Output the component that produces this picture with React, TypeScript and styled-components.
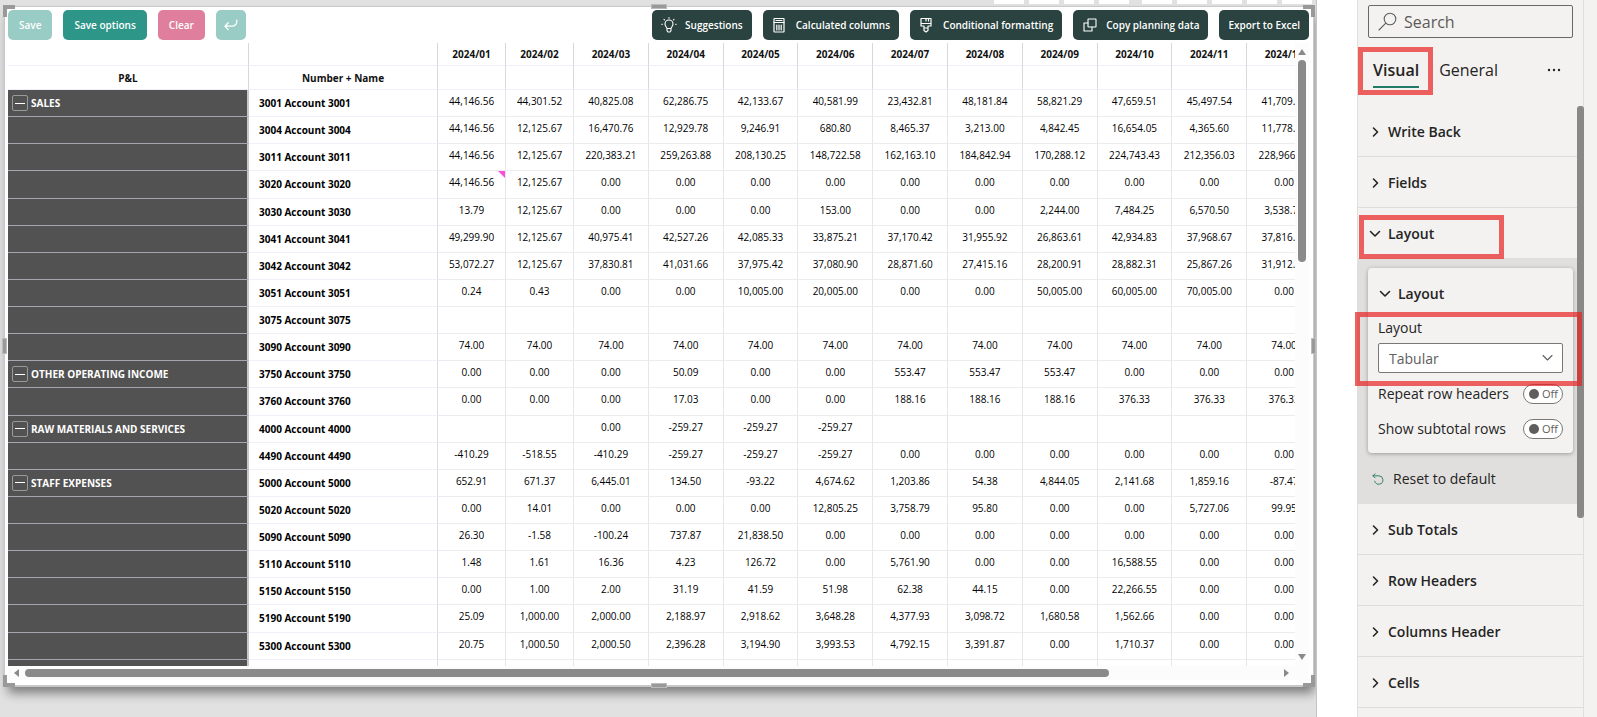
import React from "react";
import styled, { createGlobalStyle } from "styled-components";

const GlobalStyle = createGlobalStyle`
  * { box-sizing: border-box; }
  body { margin: 0; background: #fff; font-family: "Open Sans", "Noto Sans", sans-serif; color: #111; }
  button, input, select { font-family: inherit; }
`;

const Page = styled.div`
  display: flex;
  min-height: 100vh;
  overflow: hidden;
`;

/* ---------- report canvas ---------- */

const Canvas = styled.main`
  flex: 1;
  min-width: 0;
  margin-right: 40px;
  padding: 0 2px 0 4px;
  overflow: hidden;
  background: #e1e1e1;
  border-right: 1px solid #c4c4c4;
`;

const HeaderStrip = styled.div`
  display: flex;
  justify-content: flex-end;
  gap: 5px;
  height: 6px;
  padding: 0 2px 2px 0;
`;

const HeaderSlot = styled.span<{ $gapAfter?: boolean }>`
  width: 30px;
  background: #fff;
  margin-right: ${(p) => (p.$gapAfter ? "8px" : "0")};
`;

const Visual = styled.section`
  position: relative;
  background: #fff;
  border: 1px solid #c8c8c8;
  border-bottom-width: 2px;
  padding: 3px 4px 5px 3px;
  box-shadow: 2px 8px 10px -2px rgba(0, 0, 0, 0.45);
`;

const Corner = styled.span<{ $v: "top" | "bottom"; $h: "left" | "right" }>`
  position: absolute;
  width: 12px;
  height: 12px;
  ${(p) => p.$v}: -2px;
  ${(p) => p.$h}: -2px;
  border: 0 solid #999;
  border-${(p) => p.$v}-width: 4px;
  border-${(p) => p.$h}-width: 4px;
`;

const EdgeHandle = styled.span<{ $side: "top" | "bottom" | "left" | "right" }>`
  position: absolute;
  background: #999;
  border: 1px solid #bbb;
  ${(p) => p.$side}: -3px;
  ${(p) =>
    p.$side === "top" || p.$side === "bottom"
      ? "left: calc(50% - 8px); width: 16px; height: 5px;"
      : "top: calc(50% - 8px); height: 16px; width: 5px;"}
`;

const Toolbar = styled.div`
  position: relative;
  display: flex;
  gap: 11px;
  height: 33px;
  align-items: flex-start;
`;

const ToolButton = styled.button<{ $tone: "mint" | "teal" | "pink" | "dark" }>`
  display: flex;
  align-items: center;
  justify-content: center;
  gap: 8px;
  height: 30px;
  padding: 0 ${(p) => (p.$tone === "dark" ? 9 : 11)}px;
  border: 0;
  border-radius: 5px;
  color: #fff;
  font-size: 10px;
  font-weight: 600;
  line-height: 14px;
  white-space: nowrap;
  background: ${(p) => ({ mint: "#99ccc4", teal: "#2d9688", pink: "#e07f9d", dark: "#2a4340" })[p.$tone]};
  svg { flex: none; }
`;

const IconButton = styled(ToolButton)`
  width: 30px;
  padding: 0;
`;

const Spacer = styled.div`
  flex: 1;
`;

const GridArea = styled.div`
  display: flex;
  height: 623px;
`;

const TableClip = styled.div`
  flex: 1;
  min-width: 0;
  overflow: hidden;
`;

const Table = styled.table`
  table-layout: fixed;
  border-collapse: separate;
  border-spacing: 0;
  width: 1314px;
  height: 644px;
  font-size: 10px;
  line-height: 14px;
`;

const NarrowCol = styled.col<{ $w: number }>`
  width: ${(p) => p.$w}px;
`;

const HeadCell = styled.th<{ $tall?: boolean }>`
  height: ${(p) => (p.$tall ? 24 : 23)}px;
  padding: 0;
  border-right: 1px solid #d8d8da;
  border-bottom: 1px solid #eef1fb;
  text-align: center;
  font-weight: 700;
`;

const GroupCell = styled.th`
  height: 27px;
  padding: 0 0 0 4px;
  background: #525252;
  color: #fff;
  border-right: 2px solid #c8c8c8;
  border-bottom: 1px solid #a6a6b2;
  text-align: left;
  font-weight: 700;
`;

const GroupLabel = styled.div`
  display: flex;
  align-items: center;
  gap: 3px;
`;

const Collapse = styled.button`
  display: flex;
  align-items: center;
  justify-content: center;
  width: 16px;
  height: 16px;
  padding: 0;
  background: transparent;
  border: 1px solid #999;
  border-radius: 2px;
`;

const Dash = styled.span`
  width: 10px;
  height: 1px;
  background: #fff;
`;

const NameCell = styled.th`
  padding: 0 0 0 10px;
  border-right: 1px solid #dcdcde;
  border-bottom: 1px solid #eef1fb;
  text-align: left;
  font-weight: 700;
  color: #000;
`;

const ValueCell = styled.td`
  position: relative;
  padding: 0 0 4px;
  border-right: 1px solid #e6e6ea;
  border-bottom: 1px solid #ececf0;
  text-align: center;
  color: #000;
`;

const Marker = styled.span`
  position: absolute;
  top: 0;
  right: 0;
  border-top: 7px solid #fb4fd8;
  border-left: 7px solid transparent;
`;

const VBar = styled.div`
  display: flex;
  flex-direction: column;
  align-items: center;
  gap: 4px;
  width: 14px;
  padding: 5px 0;
  background: #fcfcfc;
`;

const HBar = styled.div`
  display: flex;
  align-items: center;
  gap: 4px;
  height: 14px;
  padding: 0 19px 0 5px;
  background: #fcfcfc;
`;

const Thumb = styled.div<{ $grow: number; $axis: "x" | "y" }>`
  flex: ${(p) => p.$grow} 1 0;
  border-radius: 4px;
  background: #8a8a8a;
  ${(p) => (p.$axis === "x" ? "height: 8px;" : "width: 8px;")}
`;

const Rest = styled.div<{ $grow: number }>`
  flex: ${(p) => p.$grow} 1 0;
`;

/* ---------- format panel ---------- */

const Panel = styled.aside`
  width: 240px;
  padding-right: 13px;
  background: #f3f2f1;
  border-left: 1px solid #e1dfdd;
  font-size: 14px;
  line-height: 20px;
  color: #252423;
`;

const PanelBody = styled.div`
  position: relative;
  min-height: 100%;
  border-right: 1px solid #e1dfdd;
`;

const PanelThumb = styled.div`
  position: absolute;
  right: -1px;
  top: 106px;
  width: 7px;
  height: 412px;
  border-radius: 3px;
  background: #8a8886;
  z-index: 1;
`;

const PanelTop = styled.div`
  height: 106px;
  padding: 5px 10px 0;
`;

const SearchBox = styled.label`
  display: flex;
  align-items: center;
  gap: 7px;
  height: 33px;
  padding: 0 9px;
  border: 1px solid #6b6967;
  border-radius: 2px;
`;

const SearchInput = styled.input`
  flex: 1;
  min-width: 0;
  padding: 0;
  border: 0;
  outline: 0;
  background: transparent;
  font-size: 16px;
  &::placeholder { color: #5c5a58; opacity: 1; }
`;

const Tabs = styled.div`
  display: flex;
  align-items: center;
  gap: 20px;
  height: 54px;
  padding: 10px 12px 0 5px;
`;

const Tab = styled.button<{ $active?: boolean }>`
  position: relative;
  height: 36px;
  padding: 2px 0 0;
  border: 0;
  border-bottom: 2px solid ${(p) => (p.$active ? "#217a66" : "transparent")};
  background: transparent;
  color: #252423;
  font-size: 16px;
  line-height: 24px;
  font-weight: ${(p) => (p.$active ? 600 : 400)};
`;

const MoreButton = styled.button`
  display: flex;
  margin-left: auto;
  padding: 0;
  border: 0;
  background: transparent;
`;

const Highlight = styled.span<{ $inset: string }>`
  position: absolute;
  inset: ${(p) => p.$inset};
  border: 5px solid rgba(231, 33, 33, 0.7);
  pointer-events: none;
  z-index: 2;
`;

const Section = styled.div`
  position: relative;
  border-bottom: 1px solid #dedcda;
`;

const SectionButton = styled.button`
  display: flex;
  align-items: center;
  gap: 7px;
  width: 100%;
  height: 50px;
  padding: 2px 0 0 11px;
  border: 0;
  background: transparent;
  color: #252423;
  font-size: 14px;
  font-weight: 600;
  line-height: 20px;
`;

const OpenArea = styled.div`
  padding: 9px 10px 0;
  background: #e0dfde;
`;

const Card = styled.div`
  position: relative;
  padding: 0 10px 7px;
  border-radius: 4px;
  background: #f3f2f1;
  box-shadow: 0 1px 4px rgba(0, 0, 0, 0.3);
`;

const CardButton = styled(SectionButton)`
  padding: 2px 0 0 1px;
`;

const FieldLabel = styled.label`
  display: block;
  margin-bottom: 5px;
`;

const SelectWrap = styled.div`
  position: relative;
  display: flex;
  margin-bottom: 3px;
  svg { position: absolute; right: 10px; top: 10px; pointer-events: none; }
`;

const Select = styled.select`
  appearance: none;
  width: 100%;
  height: 30px;
  padding: 0 10px;
  border: 1px solid #7a7876;
  border-radius: 2px;
  background: #fff;
  color: #605e5c;
  font-size: 14px;
`;

const ToggleRow = styled.label`
  display: flex;
  align-items: center;
  justify-content: space-between;
  height: 35px;
  white-space: nowrap;
`;

const Toggle = styled.span`
  position: relative;
  display: flex;
  align-items: center;
  gap: 3px;
  width: 40px;
  height: 20px;
  padding-left: 5px;
  border: 1px solid #7a7876;
  border-radius: 10px;
  background: #fff;
  color: #605e5c;
  font-size: 11px;
  line-height: 18px;
`;

const ToggleInput = styled.input`
  appearance: none;
  flex: none;
  width: 10px;
  height: 10px;
  margin: 0;
  border-radius: 5px;
  background: #605e5c;
`;

const ResetButton = styled.button`
  display: flex;
  align-items: center;
  gap: 9px;
  height: 51px;
  padding: 0 0 0 4px;
  border: 0;
  background: transparent;
  color: #252423;
  font-size: 14px;
  line-height: 20px;
`;

/* ---------- icons ---------- */

const line = { fill: "none", stroke: "currentColor", strokeLinecap: "round", strokeLinejoin: "round" } as const;

const BulbIcon = () => (
  <svg width="16" height="16" viewBox="0 0 16 16" {...line} strokeWidth="1.1">
    <path d="M6 11.5C5.6 9.8 4 9.2 4 7a4 4 0 0 1 8 0c0 2.2-1.6 2.8-2 4.5zM6 11.5v2.2l1 1.3h2l1-1.3v-2.2" />
    <path d="M8 .6v.6M3 2.3l.5.5M13 2.3l-.5.5M.8 7.3h.6M14.6 7.3h.6" />
  </svg>
);

const CalcIcon = () => (
  <svg width="16" height="16" viewBox="0 0 16 16" {...line} strokeWidth="1.2">
    <rect x="2" y="1.5" width="10" height="13.5" rx=".5" />
    <path d="M2 5.5h10M4 3.5h6M4.8 8v5M7 8v5M9.2 8v5" />
  </svg>
);

const BrushIcon = () => (
  <svg width="16" height="16" viewBox="0 0 16 16" {...line} strokeWidth="1.2">
    <path d="M2 1.5h10v7.5H9v4.5L7 15l-2-1.5V9H2zM2 6.5h10M7 1.5v2.5M9.5 1.5v2.5M5.2 11h3.6" />
  </svg>
);

const CopyIcon = () => (
  <svg width="16" height="16" viewBox="0 0 16 16" {...line} strokeWidth="1.1">
    <rect x="6" y="2" width="8" height="8" rx=".5" />
    <path d="M6 6H2v8h8v-4" />
  </svg>
);

const EnterIcon = () => (
  <svg width="14" height="12" viewBox="0 0 14 12" {...line} strokeWidth="1.3">
    <path d="M12.8 1.2c.3 4-1.8 6-5.3 6H1.2M4.2 3.8L1 7.2l3.2 3.4" />
  </svg>
);

const SearchIcon = () => (
  <svg width="19" height="19" viewBox="0 0 19 19" {...line} stroke="#605e5c" strokeWidth="1.1">
    <circle cx="12" cy="7" r="5.8" />
    <path d="M7.8 11.2L1 18" />
  </svg>
);

const Chevron = ({ open }: { open?: boolean }) => (
  <svg width="12" height="12" viewBox="0 0 12 12" {...line} strokeWidth="1.6">
    <path d={open ? "M1.5 3.5L6 8l4.5-4.5" : "M4.5 2L8.5 6l-4 4"} />
  </svg>
);

const SelectChevron = () => (
  <svg width="11" height="10" viewBox="0 0 11 10" {...line} stroke="#605e5c" strokeWidth="1.1">
    <path d="M1 2.5L5.5 7 10 2.5" />
  </svg>
);

const ResetIcon = () => (
  <svg width="12" height="12" viewBox="0 0 12 12" {...line} stroke="#2f7d6b" strokeWidth="1">
    <path d="M3 .8L1 2.8l2 2M1 2.8h5.8a4.2 4.2 0 1 1-4.1 5.4" />
  </svg>
);

const Arrow = ({ dir }: { dir: "up" | "down" | "left" | "right" }) => (
  <svg width="8" height="8" viewBox="0 0 8 8" fill="#8a8a8a">
    <path d={{ up: "M4 1l4 6H0z", down: "M4 7l4-6H0z", left: "M1 4l5-4v8z", right: "M7 4L2 0v8z" }[dir]} />
  </svg>
);

/* ---------- data ---------- */

const months = ["01", "02", "03", "04", "05", "06", "07", "08", "09", "10", "11", "12"].map((m) => `2024/${m}`);

const rows: { group?: string; id: string; values: string; marked?: number }[] = [
  { group: "SALES", id: "3001", values: "44,146.56 44,301.52 40,825.08 62,286.75 42,133.67 40,581.99 23,432.81 48,181.84 58,821.29 47,659.51 45,497.54 41,709.20" },
  { id: "3004", values: "44,146.56 12,125.67 16,470.76 12,929.78 9,246.91 680.80 8,465.37 3,213.00 4,842.45 16,654.05 4,365.60 11,778.20" },
  { id: "3011", values: "44,146.56 12,125.67 220,383.21 259,263.88 208,130.25 148,722.58 162,163.10 184,842.94 170,288.12 224,743.43 212,356.03 228,966.20" },
  { id: "3020", values: "44,146.56 12,125.67 0.00 0.00 0.00 0.00 0.00 0.00 0.00 0.00 0.00 0.00", marked: 0 },
  { id: "3030", values: "13.79 12,125.67 0.00 0.00 0.00 153.00 0.00 0.00 2,244.00 7,484.25 6,570.50 3,538.75" },
  { id: "3041", values: "49,299.90 12,125.67 40,975.41 42,527.26 42,085.33 33,875.21 37,170.42 31,955.92 26,863.61 42,934.83 37,968.67 37,816.20" },
  { id: "3042", values: "53,072.27 12,125.67 37,830.81 41,031.66 37,975.42 37,080.90 28,871.60 27,415.16 28,200.91 28,882.31 25,867.26 31,912.20" },
  { id: "3051", values: "0.24 0.43 0.00 0.00 10,005.00 20,005.00 0.00 0.00 50,005.00 60,005.00 70,005.00 0.00" },
  { id: "3075", values: "" },
  { id: "3090", values: "74.00 74.00 74.00 74.00 74.00 74.00 74.00 74.00 74.00 74.00 74.00 74.00" },
  { group: "OTHER OPERATING INCOME", id: "3750", values: "0.00 0.00 0.00 50.09 0.00 0.00 553.47 553.47 553.47 0.00 0.00 0.00" },
  { id: "3760", values: "0.00 0.00 0.00 17.03 0.00 0.00 188.16 188.16 188.16 376.33 376.33 376.33" },
  { group: "RAW MATERIALS AND SERVICES", id: "4000", values: "_ _ 0.00 -259.27 -259.27 -259.27" },
  { id: "4490", values: "-410.29 -518.55 -410.29 -259.27 -259.27 -259.27 0.00 0.00 0.00 0.00 0.00 0.00" },
  { group: "STAFF EXPENSES", id: "5000", values: "652.91 671.37 6,445.01 134.50 -93.22 4,674.62 1,203.86 54.38 4,844.05 2,141.68 1,859.16 -87.47" },
  { id: "5020", values: "0.00 14.01 0.00 0.00 0.00 12,805.25 3,758.79 95.80 0.00 0.00 5,727.06 99.95" },
  { id: "5090", values: "26.30 -1.58 -100.24 737.87 21,838.50 0.00 0.00 0.00 0.00 0.00 0.00 0.00" },
  { id: "5110", values: "1.48 1.61 16.36 4.23 126.72 0.00 5,761.90 0.00 0.00 16,588.55 0.00 0.00" },
  { id: "5150", values: "0.00 1.00 2.00 31.19 41.59 51.98 62.38 44.15 0.00 22,266.55 0.00 0.00" },
  { id: "5190", values: "25.09 1,000.00 2,000.00 2,188.97 2,918.62 3,648.28 4,377.93 3,098.72 1,680.58 1,562.66 0.00 0.00" },
  { id: "5300", values: "20.75 1,000.50 2,000.50 2,396.28 3,194.90 3,993.53 4,792.15 3,391.87 0.00 1,710.37 0.00 0.00" },
];

const DataTable = () => (
  <Table>
    <colgroup>
      <NarrowCol $w={241} />
      <NarrowCol $w={189} />
      <NarrowCol $w={68} />
      <NarrowCol $w={68} />
      {months.slice(2).map((m) => <col key={m} />)}
    </colgroup>
    <thead>
      <tr>
        <HeadCell />
        <HeadCell />
        {months.map((m) => <HeadCell key={m} scope="col">{m}</HeadCell>)}
      </tr>
      <tr>
        <HeadCell $tall scope="col">P&amp;L</HeadCell>
        <HeadCell $tall scope="col">Number + Name</HeadCell>
        {months.map((m) => <HeadCell $tall key={m} />)}
      </tr>
    </thead>
    <tbody>
      {rows.map((row) => {
        const values = row.values.split(" ");
        return (
          <tr key={row.id}>
            <GroupCell>
              {row.group && (
                <GroupLabel>
                  <Collapse aria-label={`Collapse ${row.group}`}><Dash /></Collapse>
                  {row.group}
                </GroupLabel>
              )}
            </GroupCell>
            <NameCell scope="row">{`${row.id} Account ${row.id}`}</NameCell>
            {months.map((m, i) => (
              <ValueCell key={m}>
                {values[i] === "_" ? "" : values[i]}
                {row.marked === i && <Marker />}
              </ValueCell>
            ))}
          </tr>
        );
      })}
      <tr>
        <GroupCell />
        <NameCell />
        {months.map((m) => <ValueCell key={m} />)}
      </tr>
    </tbody>
  </Table>
);

const PanelSection = ({ title }: { title: string }) => (
  <Section>
    <SectionButton><Chevron />{title}</SectionButton>
  </Section>
);

export default function App() {
  return (
    <Page>
      <GlobalStyle />
      <Canvas>
        <HeaderStrip>
          {[0, 1, 2, 3, 4, 5, 6, 7, 8].map((i) => <HeaderSlot key={i} $gapAfter={i === 3} />)}
        </HeaderStrip>
        <Visual>
          <Corner $v="top" $h="left" />
          <Corner $v="top" $h="right" />
          <Corner $v="bottom" $h="left" />
          <Corner $v="bottom" $h="right" />
          <EdgeHandle $side="top" />
          <EdgeHandle $side="bottom" />
          <EdgeHandle $side="left" />
          <EdgeHandle $side="right" />
          <Toolbar>
            <ToolButton $tone="mint">Save</ToolButton>
            <ToolButton $tone="teal">Save options</ToolButton>
            <ToolButton $tone="pink">Clear</ToolButton>
            <IconButton $tone="mint" aria-label="Enter"><EnterIcon /></IconButton>
            <Spacer />
            <ToolButton $tone="dark"><BulbIcon />Suggestions</ToolButton>
            <ToolButton $tone="dark"><CalcIcon />Calculated columns</ToolButton>
            <ToolButton $tone="dark"><BrushIcon />Conditional formatting</ToolButton>
            <ToolButton $tone="dark"><CopyIcon />Copy planning data</ToolButton>
            <ToolButton $tone="dark">Export to Excel</ToolButton>
          </Toolbar>
          <GridArea>
            <TableClip><DataTable /></TableClip>
            <VBar>
              <Arrow dir="up" />
              <Thumb $axis="y" $grow={69} />
              <Rest $grow={131} />
              <Arrow dir="down" />
            </VBar>
          </GridArea>
          <HBar>
            <Arrow dir="left" />
            <Thumb $axis="x" $grow={347} />
            <Rest $grow={53} />
            <Arrow dir="right" />
          </HBar>
        </Visual>
      </Canvas>
      <Panel>
        <PanelBody>
          <PanelThumb />
          <PanelTop>
            <SearchBox>
              <SearchIcon />
              <SearchInput placeholder="Search" aria-label="Search" />
            </SearchBox>
            <Tabs>
              <Tab $active>Visual<Highlight $inset="-5px -14px -9px -15px" /></Tab>
              <Tab>General</Tab>
              <MoreButton aria-label="More options">
                <svg width="14" height="4" viewBox="0 0 14 4" fill="#252423">
                  <circle cx="2" cy="2" r="1.2" /><circle cx="7" cy="2" r="1.2" /><circle cx="12" cy="2" r="1.2" />
                </svg>
              </MoreButton>
            </Tabs>
          </PanelTop>
          <PanelSection title="Write Back" />
          <PanelSection title="Fields" />
          <Section>
            <SectionButton><Chevron open />Layout</SectionButton>
            <Highlight $inset="7px 79px -1px 1px" />
          </Section>
          <OpenArea>
            <Card>
              <CardButton><Chevron open />Layout</CardButton>
              <FieldLabel htmlFor="layout">Layout</FieldLabel>
              <SelectWrap>
                <Select id="layout" defaultValue="Tabular"><option>Tabular</option></Select>
                <SelectChevron />
              </SelectWrap>
              <ToggleRow>Repeat row headers<Toggle><ToggleInput type="checkbox" role="switch" />Off</Toggle></ToggleRow>
              <ToggleRow>Show subtotal rows<Toggle><ToggleInput type="checkbox" role="switch" />Off</Toggle></ToggleRow>
              <Highlight $inset="44px -9px 67px -13px" />
            </Card>
            <ResetButton><ResetIcon />Reset to default</ResetButton>
          </OpenArea>
          <PanelSection title="Sub Totals" />
          <PanelSection title="Row Headers" />
          <PanelSection title="Columns Header" />
          <PanelSection title="Cells" />
        </PanelBody>
      </Panel>
    </Page>
  );
}
